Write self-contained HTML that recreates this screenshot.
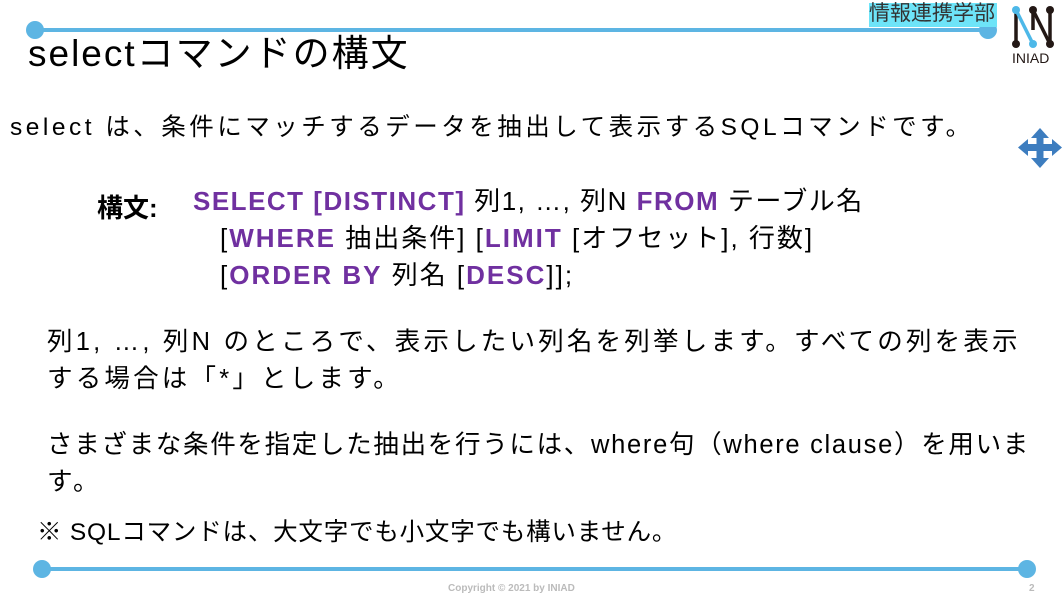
<!DOCTYPE html>
<html><head><meta charset="utf-8"><style>
html,body{margin:0;padding:0;background:#fff;}
body{width:1064px;height:596px;position:relative;overflow:hidden;font-family:"Liberation Sans","Noto Sans CJK JP",sans-serif;color:#000;}
.t{position:absolute;white-space:nowrap;line-height:1;}
.p{color:#7030A0;font-weight:bold;}
</style></head><body>
<svg width="1064" height="596" style="position:absolute;left:0;top:0">
<line x1="35" y1="30" x2="990" y2="30" stroke="#5DB5E3" stroke-width="4"/>
<circle cx="35" cy="30" r="9" fill="#5DB5E3"/>
<circle cx="988" cy="30" r="9" fill="#5DB5E3"/>
<line x1="42" y1="569" x2="1027" y2="569" stroke="#5DB5E3" stroke-width="4"/>
<circle cx="42" cy="569" r="9" fill="#5DB5E3"/>
<circle cx="1027" cy="569" r="9" fill="#5DB5E3"/>
<rect x="869" y="3" width="128" height="24" fill="#6EE4F8"/>
<g stroke="#231815" stroke-width="3.5">
<line x1="1016" y1="10" x2="1016" y2="44"/>
<line x1="1033" y1="10" x2="1050" y2="44"/>
<line x1="1050" y1="10" x2="1050" y2="44"/>
<line x1="1033" y1="10" x2="1033" y2="30"/>
</g>
<line x1="1016" y1="10" x2="1033" y2="44" stroke="#4DB8E8" stroke-width="3.5"/>
<circle cx="1016" cy="10" r="4" fill="#4DB8E8"/>
<circle cx="1033" cy="10" r="4" fill="#231815"/>
<circle cx="1050" cy="10" r="4" fill="#231815"/>
<circle cx="1016" cy="44" r="4" fill="#231815"/>
<circle cx="1033" cy="44" r="4" fill="#4DB8E8"/>
<circle cx="1050" cy="44" r="4" fill="#231815"/>
<g fill="#3D7DBF">
<rect x="1026" y="144" width="28" height="7"/>
<rect x="1036.5" y="134" width="7" height="27"/>
<polygon points="1040,128 1049,138 1031,138"/>
<polygon points="1040,168 1049,158 1031,158"/>
<polygon points="1018,147.5 1028,139 1028,156"/>
<polygon points="1062,147.5 1052,139 1052,156"/>
</g>
</svg>
<div class="t" style="left:869px;top:3px;font-size:21px;color:#333;">情報連携学部</div>
<div class="t" style="left:1012px;top:51px;font-size:14px;color:#231815;">INIAD</div>
<div class="t" style="left:28px;top:35px;font-size:37px;letter-spacing:2px;">selectコマンドの構文</div>
<div class="t" style="left:10px;top:116px;font-size:24.5px;letter-spacing:3.5px;">select は、条件にマッチするデータを抽出して表示するSQLコマンドです。</div>
<div class="t" style="left:97px;top:195px;font-size:26px;font-weight:bold;">構文:</div>
<div class="t" style="left:193px;top:188px;font-size:26px;letter-spacing:1.5px;"><span class="p">SELECT [DISTINCT]</span> 列1, …, 列N <span class="p">FROM</span> テーブル名</div>
<div class="t" style="left:220px;top:225px;font-size:26px;letter-spacing:2px;">[<span class="p">WHERE</span> 抽出条件] [<span class="p">LIMIT</span> [オフセット], 行数]</div>
<div class="t" style="left:220px;top:262px;font-size:26px;letter-spacing:2px;">[<span class="p">ORDER BY</span> 列名 [<span class="p">DESC</span>]];</div>
<div class="t" style="left:47px;top:330px;font-size:25.5px;letter-spacing:3.2px;">列1, …, 列N のところで、表示したい列名を列挙します。すべての列を表示</div>
<div class="t" style="left:47px;top:367px;font-size:25.5px;letter-spacing:3.2px;">する場合は「*」とします。</div>
<div class="t" style="left:47px;top:433px;font-size:25.5px;letter-spacing:1.7px;">さまざまな条件を指定した抽出を行うには、where句（where clause）を用いま</div>
<div class="t" style="left:47px;top:470px;font-size:25.5px;letter-spacing:3px;">す。</div>
<div class="t" style="left:37px;top:521px;font-size:24.5px;letter-spacing:0.8px;">※ SQLコマンドは、大文字でも小文字でも構いません。</div>
<div class="t" style="left:448px;top:584px;font-size:10px;font-weight:bold;color:#bbb;">Copyright © 2021 by INIAD</div>
<div class="t" style="left:1029px;top:584px;font-size:10px;font-weight:bold;color:#bbb;">2</div>
</body></html>
